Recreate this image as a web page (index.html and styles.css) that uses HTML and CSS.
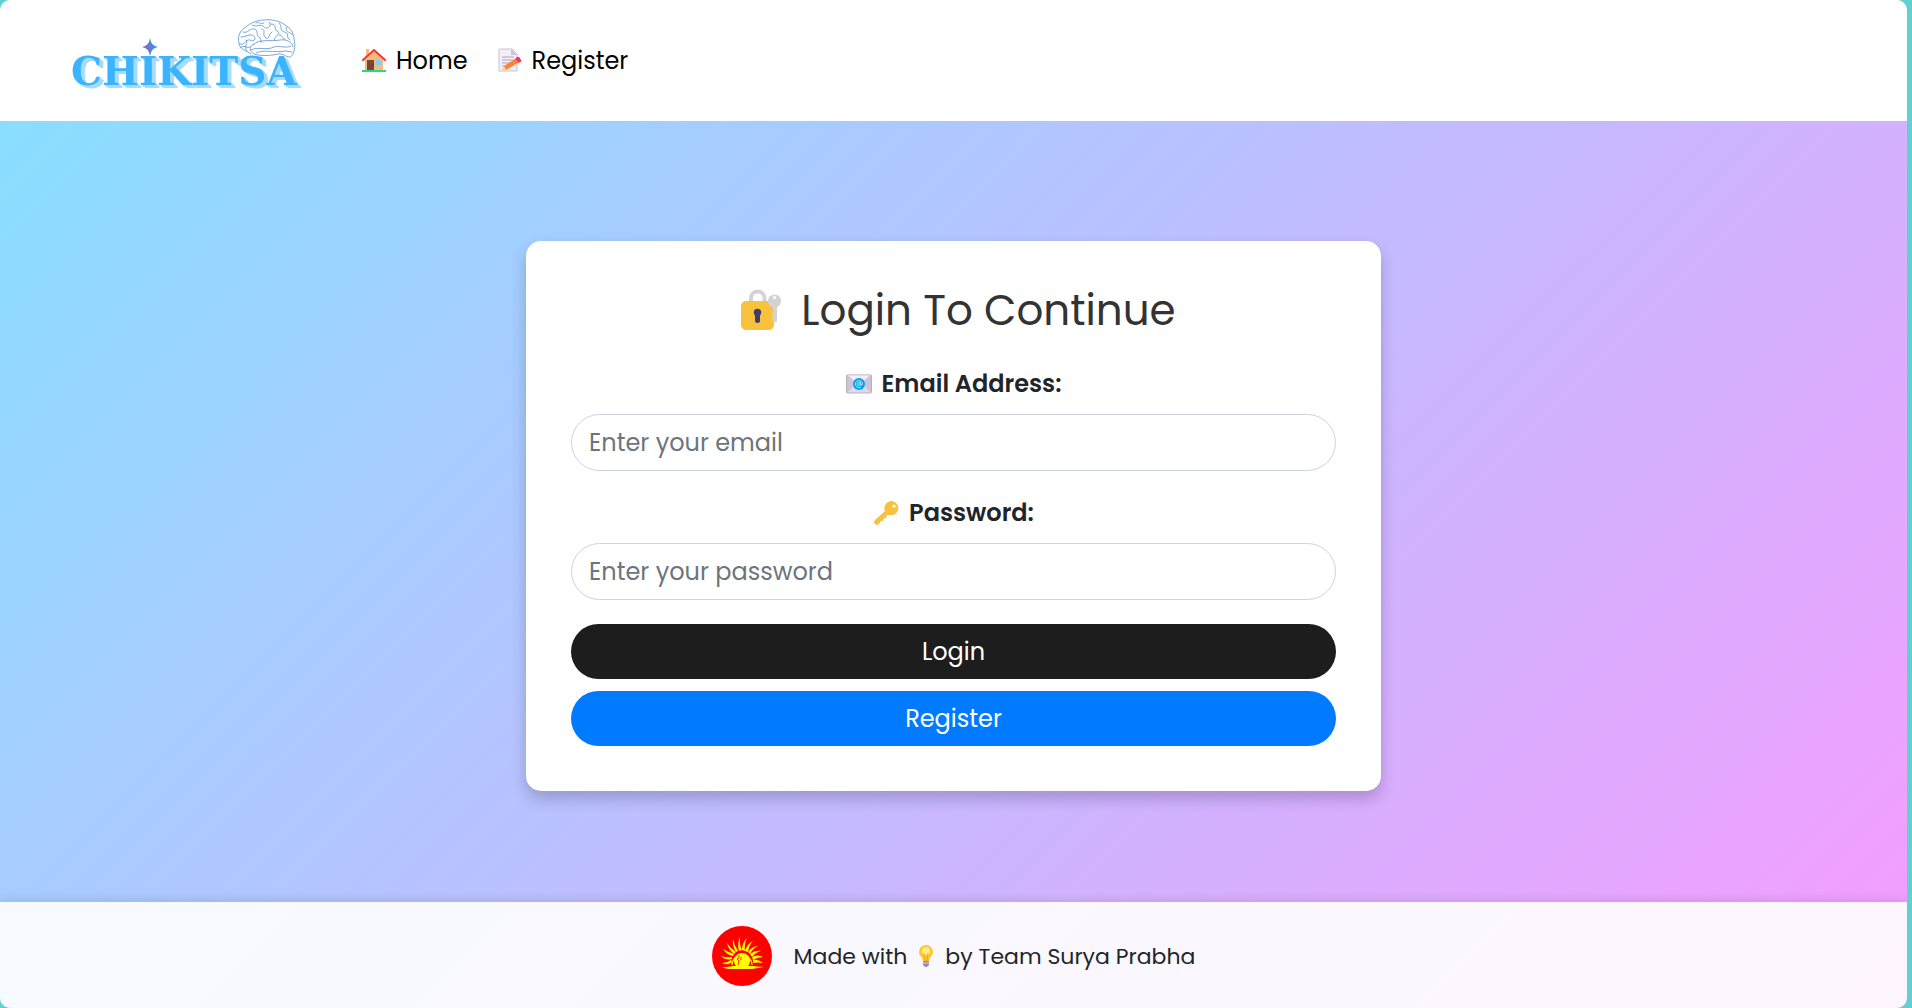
FILE: index.html
```html
<!DOCTYPE html>
<html lang="en">
<head>
    <meta charset="UTF-8">
    <meta name="viewport" content="width=device-width, initial-scale=1.0">
    <title>Chikitsa - Login</title>
    <link rel="stylesheet" href="styles.css">
</head>
<body>
    <div class="page">
        <header class="navbar">
            <a href="#" class="brand" aria-label="Chikitsa">
                <svg class="logo" viewBox="0 0 240 80">
                    <defs>
                        <linearGradient id="spark" x1="0" x2="1">
                            <stop offset="0" stop-color="#8a63b8"/>
                            <stop offset="1" stop-color="#2f9be8"/>
                        </linearGradient>
                    </defs>
                    <!-- brain -->
                    <g fill="none" stroke="#6a9fd4" stroke-width="0.9" stroke-linecap="round">
                        <path d="M179 34C175 31 167 29 167 23C165 16 169 9 174 7C178 3 186 0 192 0C200 -1 208 1 213 5C219 8 222 14 222 19C224 26 222 36 218 37C213 37 212 33 206 34C198 36 187 36 182 34C177 31 177 26 182 24"/>
                        <path d="M181 25C188 18 198 22 208 20C214 19 221 22 221 27M179 30C186 26 194 31 202 27C208 25 214 29 219 26M184 33C192 29 200 33 214 31L220 32"/>
                        <path d="M168 24C173 26 173 19 178 20C182 23 186 17 180 15C176 14 172 18 169 17M171 12C176 14 177 8 183 9C187 12 183 15 188 18C190 20 186 22 190 22"/>
                        <path d="M180 5C184 8 189 3 192 7C195 10 201 6 197 2M190 9C195 10 189 15 194 18C198 20 196 14 200 12M199 4C206 4 201 9 205 11C210 13 203 16 202 20"/>
                        <path d="M207 3C211 7 207 10 212 12C218 12 213 17 218 20M215 7C212 11 217 12 221 15M168 28C172 24 175 29 178 27M174 20C177 23 171 26 175 31M207 15C211 14 209 19 213 19M184 3C187 1 188 5 192 3"/>
                    </g>
                    <text x="-1" y="65" class="logo-text">CHIKITSA</text>
                    <path d="M78 18Q79 26 86 27Q79 28 78 36Q77 28 70 27Q77 26 78 18Z" fill="url(#spark)"/>
                </svg>
            </a>
            <nav class="nav-links">
                <a href="#" class="nav-link">
                    <svg class="nav-icon" viewBox="0 0 24 24">
                        <path d="M4 1h3v8H4zM3 12L12 3L21 12V22H3Z" fill="#f3bd79"/>
                        <path d="M1 12L12 2L23 12" fill="none" stroke="#f8312f" stroke-width="2" stroke-linecap="round"/>
                        <path d="M5 12h7v10H5z" fill="#7d4533"/>
                        <circle cx="10.500" cy="17" r=".7" fill="#402a32"/>
                        <path d="M14 12h5v5h-5z" fill="#8cc8fb"/>
                        <path d="M0 22h24v2H0z" fill="#22dd7c"/>
                    </svg>
                    Home
                </a>
                <a href="#" class="nav-link">
                    <svg class="nav-icon" viewBox="0 0 24 24">
                        <path d="M1 1h13l5 5v17H1z" fill="#f3eef8" stroke="#c9c2d3"/>
                        <path d="M13 1v6h6z" fill="#cdc4d6"/>
                        <path d="M4 9h12M4 12h12M4 15h9M4 18h6" stroke="#aaa4b8"/>
                        <path d="M6 18L17 11L20 15L8 22Z" fill="#ff822d"/>
                        <path d="M6 18L8 22L4 23Z" fill="#ffce7c"/>
                        <path d="M17 11l2-2q2-1 3.500 2t0 3l-2 1z" fill="#f8315f"/>
                    </svg>
                    Register
                </a>
            </nav>
        </header>

        <main class="content">
            <form class="login-card">
                <h1 class="login-title">
                    <svg class="title-icon" viewBox="-10 0 52 46">
                        <path d="M10 15V9.500a6.800 6.800 0 0 1 13.500 0V15" fill="none" stroke="#d3d3d3" stroke-width="4"/>
                        <rect x="0" y="13" width="33" height="29" rx="5" fill="#f9c23c"/>
                        <circle cx="33.500" cy="13" r="6.600" fill="#d3d3d3"/>
                        <circle cx="33.500" cy="9.500" r="1.600" fill="#fff"/>
                        <path d="M31.500 18h4.500v14a2 2 0 0 1-4 1l-1-3 1-2-1-3 1-2z" fill="#d3d3d3"/>
                        <circle cx="16.500" cy="24.500" r="3.700" fill="#433b6b"/>
                        <rect x="14" y="25" width="5" height="10" rx="2.500" fill="#433b6b"/>
                    </svg>
                    Login To Continue
                </h1>

                <label for="email" class="field-label">
                    <svg class="label-icon" viewBox="0 0 26 26">
                        <rect x=".5" y="4" width="25" height="18" rx="1" fill="#e3d9e9" stroke="#b7afc6"/>
                        <path d="M1 4L10 13L1 22ZM25 4L16 13L25 22Z" fill="#cdc3d8"/>
                        <path d="M1 4h24L13 14z" fill="#f3edf7" stroke="#bdb3ca" stroke-width=".6"/>
                        <circle cx="13" cy="13" r="6" fill="#00a6ed"/>
                        <circle cx="13" cy="13" r="1.500" fill="none" stroke="#fff" stroke-width=".7"/>
                        <path d="M14.500 11.500v2q1.500 1.500 2-.5a3.500 3.500 0 1 0-1.500 3" fill="none" stroke="#fff" stroke-width=".7"/>
                    </svg>
                    Email Address:
                </label>
                <input type="email" id="email" class="field-input" placeholder="Enter your email">

                <label for="password" class="field-label">
                    <svg class="label-icon" viewBox="0 0 26 26">
                        <path d="M2 20L12 11A7 7 0 1 1 17 15L14 15L13 18L11 18L10 21L8 21L6 24A2.500 2.500 0 0 1 2 20Z" fill="#f9c23c"/>
                        <circle cx="21" cy="6" r="1.600" fill="#fff"/>
                    </svg>
                    Password:
                </label>
                <input type="password" id="password" class="field-input" placeholder="Enter your password">

                <button type="submit" class="btn btn-login">Login</button>
                <button type="button" class="btn btn-register">Register</button>
            </form>
        </main>

        <footer class="footer">
            <svg class="team-logo" viewBox="0 0 60 60">
                <circle cx="30" cy="30" r="30" fill="#f00"/>
                <circle cx="30" cy="35" r="8" fill="#ff0"/>
                <path d="M10 41.500L22 40H40L52 41L40 43H16Z" fill="#ff0"/>
                <path d="M20 39A10 10 0 1 1 40 39" fill="none" stroke="#ff0" stroke-width="1.300"/>
                <!-- rays -->
                <g fill="#ff0">
                    <path d="M20 36Q15 40 10 37Q15 37 19 34ZM20 33Q14 35 9 30Q14 32 20 31ZM21 30Q15 29 11 23Q16 26 22 28Z"/>
                    <path d="M22 28Q16 23 15 17Q18 22 24 26ZM24 26Q20 20 21 13Q22 19 26 25ZM27 25Q25 18 28 11Q27 18 30 24Z"/>
                    <path d="M30 24Q30 17 35 12Q32 18 33 25ZM33 25Q35 18 41 15Q37 19 36 26ZM36 26Q40 20 46 20Q41 22 38 28Z"/>
                    <path d="M38 28Q43 24 49 25Q44 26 40 31ZM40 31Q45 28 51 31Q46 31 41 34ZM41 34Q46 33 51 37Q46 36 41 37Z"/>
                </g>
                <path d="M27 29v3l-2 1 2 2-1 4M29 31v3" fill="none" stroke="#f00" stroke-width=".8"/>
            </svg>
            <p class="footer-text">
                Made with
                <svg class="bulb-icon" viewBox="0 0 22 22">
                    <path d="M11 0a7 7 0 0 1 7 7c0 4-3 4-4 9H8C7 11 4 11 4 7a7 7 0 0 1 7-7Z" fill="#fcc934"/>
                    <circle cx="11" cy="6" r="4" fill="#fff07a"/>
                    <path d="M9 8l1 8h2l1-8" fill="none" stroke="#f39b21" stroke-width=".8"/>
                    <path d="M8 16h6v4l-2 2h-2l-2-2z" fill="#998ea4"/>
                    <path d="M8 18h6" stroke="#d3cddb"/>
                </svg>
                by Team Surya Prabha
            </p>
        </footer>
    </div>
</body>
</html>
```
FILE: styles.css
```css
* {
    box-sizing: border-box;
}
body {
    margin: 0;
    padding-right: 5px;
    background-color: #60d0d0;
    color: #212529;
    font-family: "Poppins", "Inter", sans-serif;
}
.page {
    display: flex;
    flex-direction: column;
    min-height: 100vh;
    border-radius: 10px;
    overflow: hidden;
    background: linear-gradient(135deg, #84e1ff, #f69cff);
}
.navbar {
    display: flex;
    align-items: center;
    gap: 50px;
    padding: 20px 72px 21px;
    background-color: #fff;
}
.brand {
    display: flex;
}
.logo {
    width: 240px;
    height: 80px;
    overflow: visible;
}
.logo-text {
    fill: #3bb4ff;
    font-family: "DejaVu Serif", serif;
    font-size: 39px;
    font-weight: bold;
    filter: drop-shadow(2px 2px 0 #a5dbfd) drop-shadow(2px 1px 0 #a5dbfd);
}
.nav-links {
    display: flex;
    gap: 30px;
}
.nav-link {
    display: flex;
    align-items: center;
    gap: 10px;
    color: #000;
    font-size: 24px;
    text-decoration: none;
}
.nav-icon {
    width: 24px;
    height: 24px;
}
.content {
    display: flex;
    flex: 1;
    align-items: center;
    justify-content: center;
    padding: 28px 20px 20px;
}
.login-card {
    display: flex;
    flex-direction: column;
    width: 100%;
    max-width: 855px;
    padding: 45px;
    border-radius: 15px;
    background-color: #fff;
    box-shadow: 0 8px 16px rgba(0, 0, 0, 0.2);
}
.login-title {
    display: flex;
    align-items: center;
    justify-content: center;
    gap: 18px;
    margin: 0 0 30px;
    color: #333;
    font-size: 42px;
    font-weight: 400;
    line-height: 50px;
}
.title-icon {
    width: 52px;
    height: 46px;
}
.field-label {
    display: flex;
    align-items: center;
    justify-content: center;
    gap: 10px;
    margin-bottom: 12px;
    font-size: 24px;
    font-weight: 600;
    line-height: 36px;
}
.label-icon {
    width: 26px;
    height: 26px;
}
.field-input {
    width: 100%;
    height: 57px;
    margin-bottom: 24px;
    padding: 0 17px;
    border: 1px solid #ced4da;
    border-radius: 30px;
    background-color: #fff;
    color: #495057;
    font-family: inherit;
    font-size: 24px;
}
.field-input::placeholder {
    color: #6c757d;
}
.btn {
    height: 55px;
    border: none;
    border-radius: 30px;
    color: #fff;
    font-family: inherit;
    font-size: 24px;
    cursor: pointer;
}
.btn-login {
    margin-bottom: 12px;
    background-color: #1d1d1d;
}
.btn-register {
    background-color: #007bff;
}
.footer {
    display: flex;
    align-items: center;
    justify-content: center;
    gap: 22px;
    padding: 24px 20px 22px;
    background-color: rgba(255, 255, 255, 0.9);
    box-shadow: 0 -2px 10px rgba(0, 0, 0, 0.1);
}
.team-logo {
    width: 60px;
    height: 60px;
}
.footer-text {
    display: flex;
    align-items: center;
    gap: 8px;
    margin: 0;
    font-size: 22px;
}
.bulb-icon {
    width: 22px;
    height: 22px;
}
```
